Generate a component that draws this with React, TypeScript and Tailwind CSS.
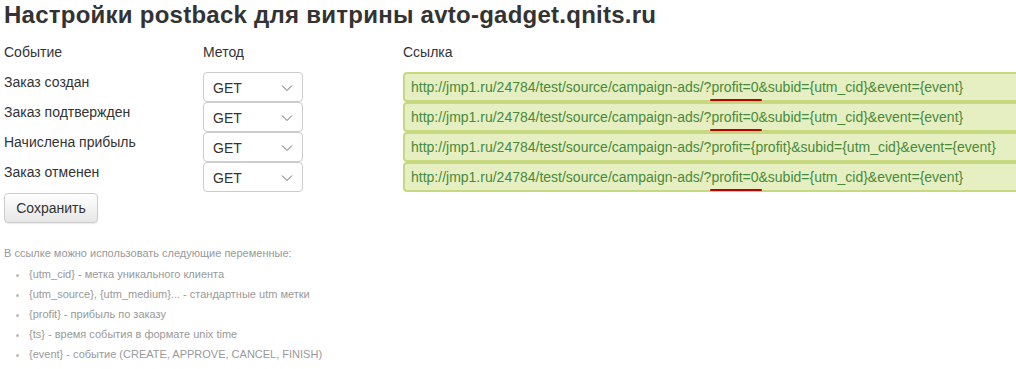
import React from "react";

const rows = [
  { label: "Заказ создан", mark: true },
  { label: "Заказ подтвержден", mark: true },
  { label: "Начислена прибыль", mark: false },
  { label: "Заказ отменен", mark: true },
];

function Chevron() {
  return (
    <svg width="12" height="8" viewBox="0 0 12 8" fill="none" className="shrink-0">
      <path d="M1 1.5 L6 6.5 L11 1.5" stroke="#666" strokeWidth="1" />
    </svg>
  );
}

export default function App() {
  return (
    <div
      className="w-[1016px] h-[369px] overflow-hidden bg-white text-[#333] px-[4px]"
      style={{ fontFamily: '"Liberation Sans", Arial, sans-serif' }}
    >
      <h1 className="text-[24px] leading-[30px] font-bold text-[#333] tracking-[0.25px]">
        Настройки postback для витрины avto-gadget.qnits.ru
      </h1>
      <div className="flex text-[14px] leading-[20px] mt-[12px]">
        <div className="w-[199px]">Событие</div>
        <div className="w-[200px]">Метод</div>
        <div>Ссылка</div>
      </div>
      <div className="mt-[10px] flex flex-col">
        {rows.map((r, i) => (
          <div key={i} className="flex h-[30px]">
            <div className="w-[199px] text-[14px] leading-[20px]">{r.label}</div>
            <div className="w-[200px]">
              <div className="w-[100px] h-[30px] border border-[#ccc] rounded-[4px] flex items-center justify-between pl-[9px] pr-[9px] text-[14px] pt-[2px]">
                <span>GET</span>
                <Chevron />
              </div>
            </div>
            <div className="flex-1 min-w-0">
              <div className="w-[640px] h-[30px] bg-[#e6efc2] border-2 border-[#c6d880] rounded-[4px] flex items-center pl-[6px] text-[14px] text-[#488a3a] whitespace-nowrap pt-[1px]">
                <span>http://jmp1.ru/24784/test/source/campaign-ads/?</span>
                {r.mark ? (
                  <>
                    <span className="relative">
                      profit=0
                      <span className="absolute left-[-1px] right-[-3px] bottom-[-3px] h-[2px] bg-[#c00000] rounded-full" />
                    </span>
                    <span>&amp;subid={"{utm_cid}"}&amp;event={"{event}"}</span>
                  </>
                ) : (
                  <span>profit={"{profit}"}&amp;subid={"{utm_cid}"}&amp;event={"{event}"}</span>
                )}
              </div>
            </div>
          </div>
        ))}
      </div>
      <button className="mt-[1px] h-[30px] w-[94px] border border-[#ccc] rounded-[4px] bg-gradient-to-b from-white to-[#e6e6e6] text-[14px] text-[#333] shadow-[0_1px_1px_rgba(0,0,0,0.08)]">
        Сохранить
      </button>
      <div className="mt-[22px] text-[11px] leading-[20px] text-[#999]">
        <div className="leading-[16px]">В ссылке можно использовать следующие переменные:</div>
        <ul className="mt-[3px] pl-[25px]">
          {[
            "{utm_cid} - метка уникального клиента",
            "{utm_source}, {utm_medium}... - стандартные utm метки",
            "{profit} - прибыль по заказу",
            "{ts} - время события в формате unix time",
            "{event} - событие (CREATE, APPROVE, CANCEL, FINISH)",
          ].map((t) => (
            <li key={t} className="list-disc marker:text-[#bbb]">
              {t}
            </li>
          ))}
        </ul>
      </div>
    </div>
  );
}
